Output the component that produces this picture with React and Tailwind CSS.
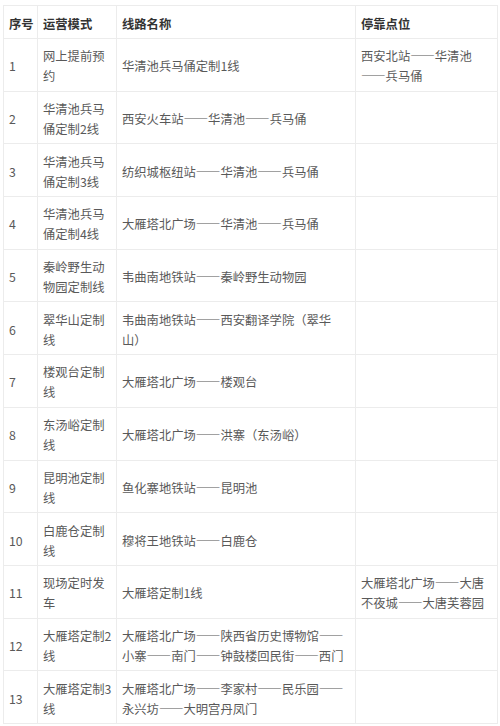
import React from 'react';

const rows = [
  ['1', '网上提前预约', '华清池兵马俑定制1线', '西安北站——华清池——兵马俑'],
  ['2', '华清池兵马俑定制2线', '西安火车站——华清池——兵马俑', ''],
  ['3', '华清池兵马俑定制3线', '纺织城枢纽站——华清池——兵马俑', ''],
  ['4', '华清池兵马俑定制4线', '大雁塔北广场——华清池——兵马俑', ''],
  ['5', '秦岭野生动物园定制线', '韦曲南地铁站——秦岭野生动物园', ''],
  ['6', '翠华山定制线', '韦曲南地铁站——西安翻译学院（翠华\n山）', ''],
  ['7', '楼观台定制线', '大雁塔北广场——楼观台', ''],
  ['8', '东汤峪定制线', '大雁塔北广场——洪寨（东汤峪）', ''],
  ['9', '昆明池定制线', '鱼化寨地铁站——昆明池', ''],
  ['10', '白鹿仓定制线', '穆将王地铁站——白鹿仓', ''],
  ['11', '现场定时发车', '大雁塔定制1线', '大雁塔北广场——大唐不夜城——大唐芙蓉园'],
  ['12', '大雁塔定制2线', '大雁塔北广场——陕西省历史博物馆——小寨——南门——钟鼓楼回民街——西门', ''],
  ['13', '大雁塔定制3线', '大雁塔北广场——李家村——民乐园——永兴坊——大明宫丹凤门', ''],
];

const cell = 'border border-[#ececec] pl-[5px] pr-[2px] pt-[3px] align-middle';

// render the dash pairs full width, as the source font does
const Text = ({ value }) =>
  value.split(/(——|\n)/).map((part, i) =>
    part === '——' ? (
      <span key={i} className="[font-feature-settings:'fwid']">
        {part}
      </span>
    ) : part === '\n' ? (
      <br key={i} />
    ) : (
      part
    ),
  );

export default function App() {
  return (
    <div
      className="bg-white pt-[5px] pl-[3px] text-[12.3px] leading-[20px] text-[#595959]"
      style={{ fontFamily: '"Noto Sans CJK SC", "Microsoft YaHei", sans-serif' }}
    >
      <table className="w-[494px] table-fixed border-collapse">
        <colgroup>
          <col className="w-[34px]" />
          <col className="w-[79px]" />
          <col className="w-[239px]" />
          <col className="w-[142px]" />
        </colgroup>
        <thead>
          <tr className="h-[33px] text-left font-bold text-[#333]">
            <th className={`${cell} whitespace-nowrap`}>序号</th>
            <th className={cell}>运营模式</th>
            <th className={cell}>线路名称</th>
            <th className={cell}>停靠点位</th>
          </tr>
        </thead>
        <tbody>
          {rows.map((r) => (
            <tr key={r[0]} className="h-[52.7px]">
              <td className={cell}>{r[0]}</td>
              <td className={cell}>{r[1]}</td>
              <td className={cell}>
                <Text value={r[2]} />
              </td>
              <td className={cell}>
                <Text value={r[3]} />
              </td>
            </tr>
          ))}
        </tbody>
      </table>
    </div>
  );
}
